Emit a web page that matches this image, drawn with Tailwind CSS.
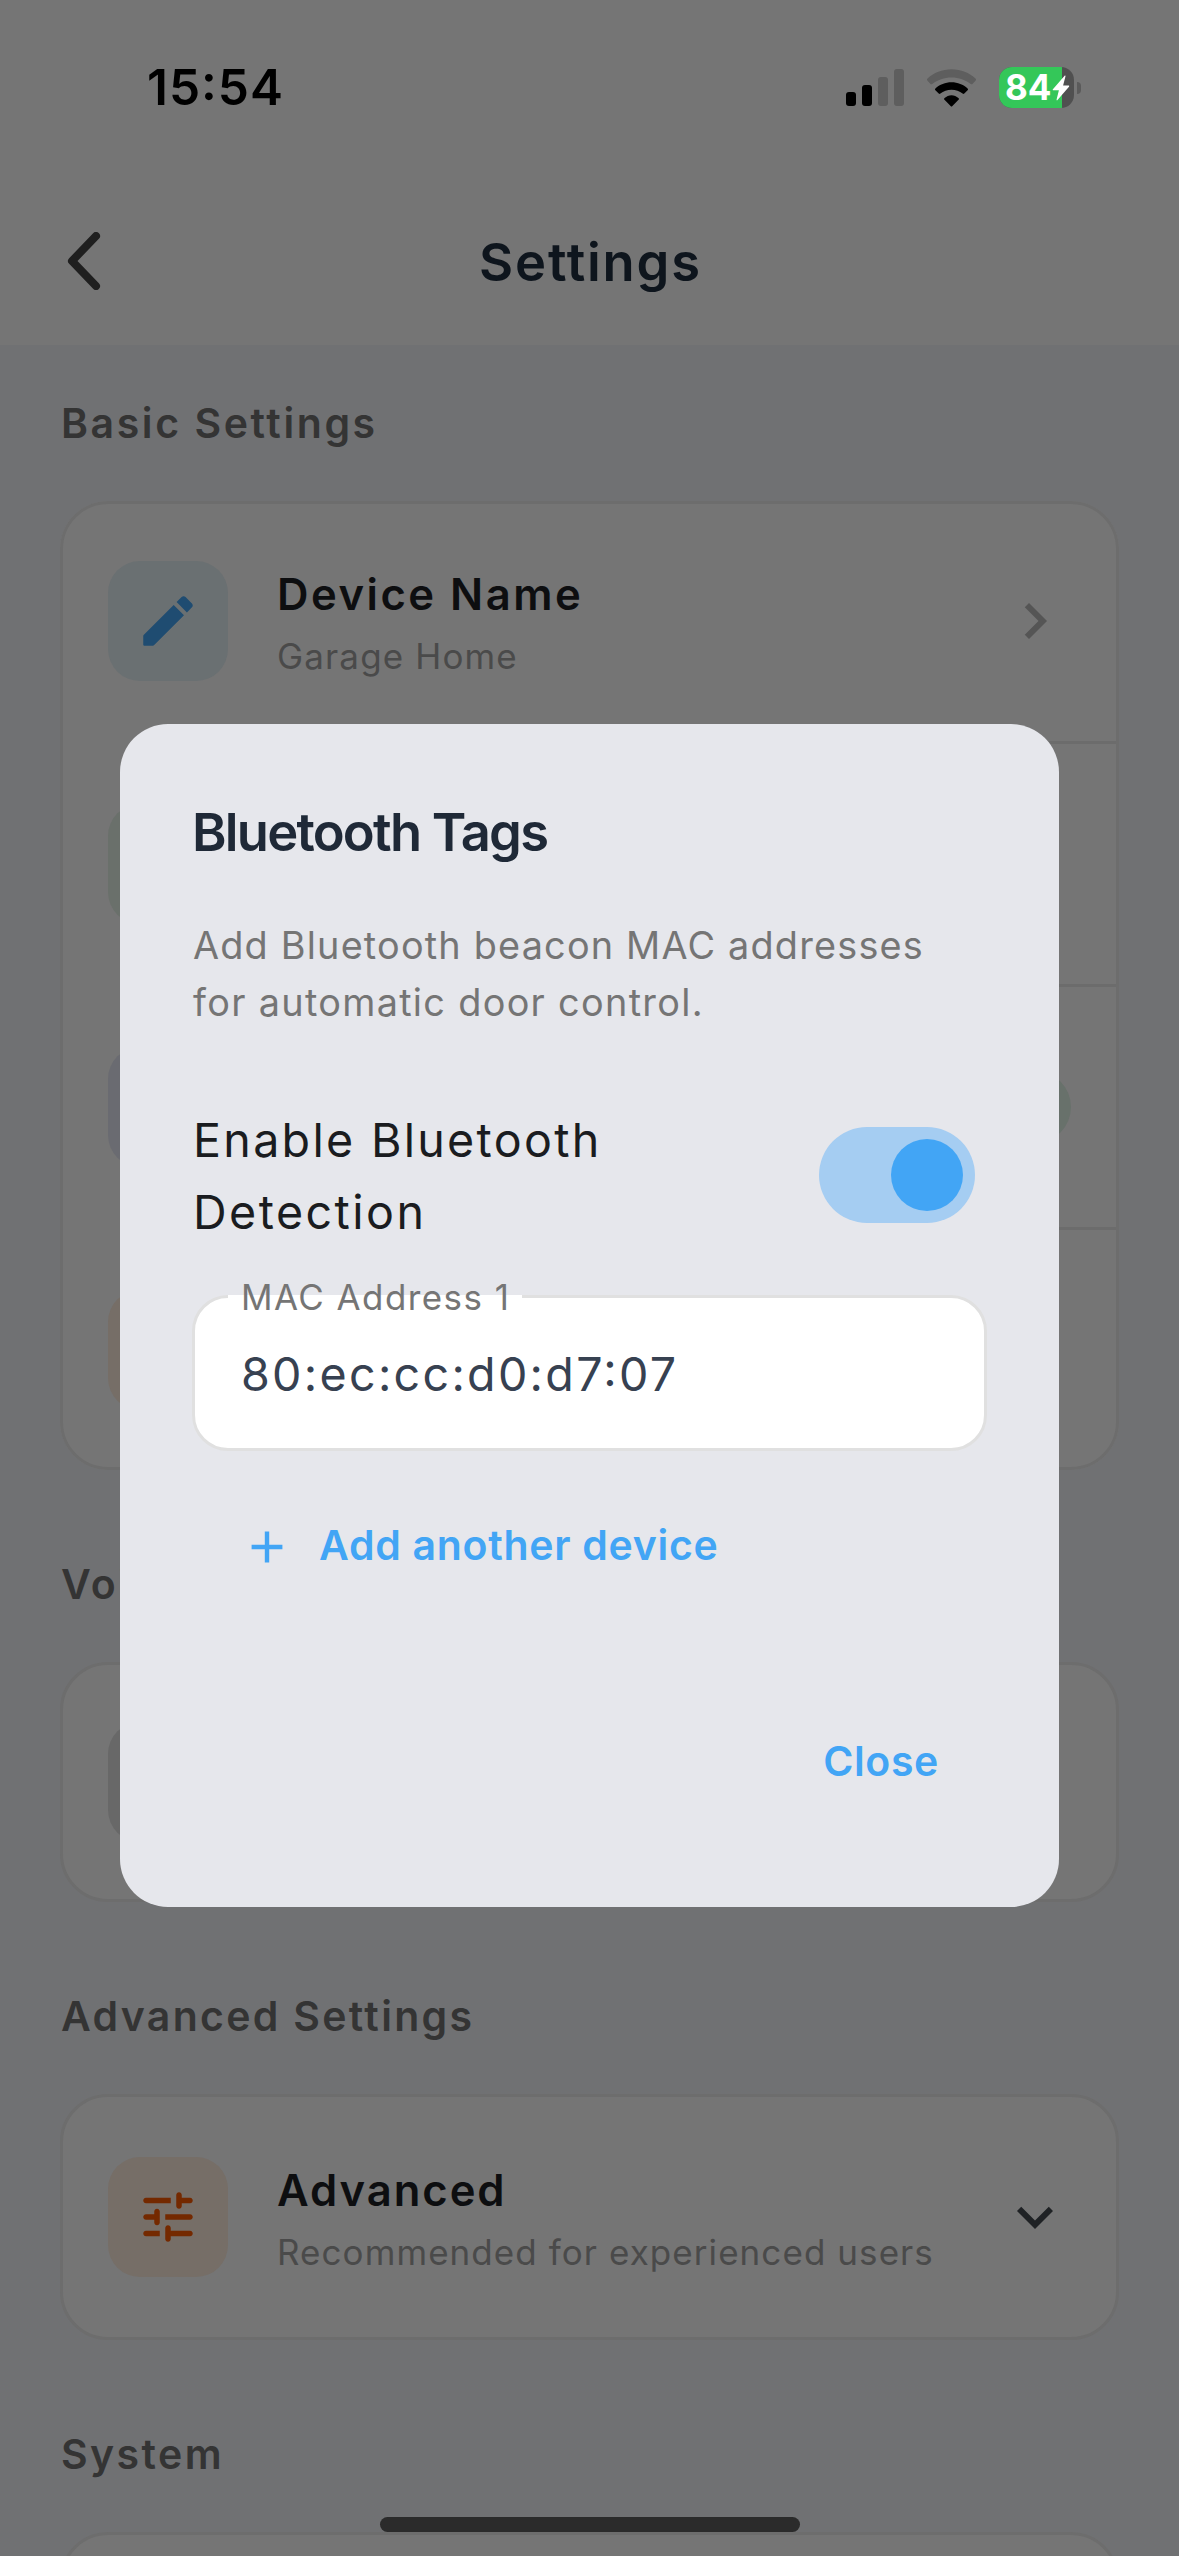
<!DOCTYPE html>
<html lang="en">

<head>
    <meta charset="UTF-8" />
    <meta name="viewport" content="width=device-width, initial-scale=1.0" />
    <title>Settings</title>
    <script src="https://cdn.jsdelivr.net/npm/@tailwindcss/browser@4"></script>
</head>

<body class="font-['Inter',sans-serif] bg-[#707173]">

    <div class="relative w-[1179px] h-[2556px] overflow-hidden bg-[#707173]">

        <!-- Header -->
        <header class="h-[345px] bg-[#757575]">
            <!-- Status bar -->
            <div class="h-44 flex items-center justify-between pl-[147px] pr-[98px]">
                <span class="text-[49.5px] leading-none font-semibold tracking-[1px] text-black [font-feature-settings:'calt'_1]">15:54</span>
                <div class="flex items-center mb-px">
                    <svg class="w-[58px] h-[37px]" viewBox="0 0 58 37">
                        <rect x="0" y="23" width="10" height="14" rx="3" fill="#000" />
                        <rect x="16" y="16" width="10" height="21" rx="3" fill="#000" />
                        <rect x="32" y="8" width="10" height="29" rx="3" fill="#5e5e5e" />
                        <rect x="48" y="0" width="10" height="37" rx="3" fill="#5e5e5e" />
                    </svg>
                    <svg class="ml-[22px] w-[51px] h-[38px]" viewBox="0 0 51 38">
                        <path d="M1.3 11.4a1.2 1.2 0 0 1 0-1.7C7.6 3.7 16.2.3 25.5.3s17.9 3.4 24.2 9.400a1.200 1.200 0 0 1 0 1.700l-3.200 3.500a1.300 1.300 0 0 1-1.800 0C39.500 10.900 32.800 8.400 25.500 8.400S11.500 10.900 6.300 14.900a1.300 1.300 0 0 1-1.800 0z" fill="#5e5e5e" />
                        <path d="M9.400 21.200a1.200 1.200 0 0 1 0-1.800C13.700 15.500 19.300 13.200 25.500 13.200s11.800 2.300 16.100 6.200a1.200 1.200 0 0 1 0 1.800l-3.300 3.400a1.200 1.200 0 0 1-1.700 0C33.600 22.200 29.700 20.800 25.500 20.800s-8.100 1.400-11.100 3.800a1.200 1.200 0 0 1-1.700 0z" fill="#000" />
                        <path d="M18.500 30.800a1.200 1.200 0 0 1 .1-1.800C20.500 27.300 22.900 26.200 25.500 26.200s5 1.100 6.900 2.800a1.200 1.200 0 0 1 .1 1.800l-6.100 6.200a1.200 1.200 0 0 1-1.800 0z" fill="#000" />
                    </svg>
                    <!-- Battery -->
                    <div class="relative ml-[22px] w-[75px] h-[41px] rounded-[13px] overflow-hidden bg-[#505050] flex items-center">
                        <div class="absolute inset-y-0 left-0 w-[63px] bg-[#34c759]"></div>
                        <span class="relative ml-[6px] text-[35px] leading-none font-bold tracking-[0px] text-white">84</span>
                        <svg class="absolute left-[53px] top-[8px] w-[18px] h-[26px]" viewBox="0 0 18 26">
                            <path d="M12.600.8L.9 14.200c-.4.5-.2 1.100.5 1.100h5.500L4.600 24.600c-.2.800.4 1.100.9.500L17 11.700c.4-.5.2-1.100-.5-1.100h-5.400L13.500 1.300c.2-.8-.4-1.100-.9-.5z" fill="#fff" />
                        </svg>
                    </div>
                    <div class="ml-[3px] w-1 h-3 rounded-r-full bg-[#5a5a5a]"></div>
                </div>
            </div>
            <!-- Title bar -->
            <div class="relative h-[169px] flex items-center justify-center">
                <svg class="absolute left-[66px] top-[56px] w-[36px] h-[58px]" viewBox="0 0 36 58" fill="none"
                    stroke="#1f1f1f" stroke-width="8" stroke-linecap="round" stroke-linejoin="round">
                    <path d="M30 4L6 29l24 25" />
                </svg>
                <h1 class="mt-[3px] ml-[2px] text-[52.5px] leading-none font-semibold tracking-[1.84px] text-[#0e151d]">Settings</h1>
            </div>
        </header>

        <main class="px-[60px]">
            <!-- Basic settings -->
            <h2 class="pt-[53px] pb-[53px] pl-[1px] text-[41px] leading-[50px] font-semibold tracking-[2.58px] text-[#343434]">Basic Settings</h2>
            <div class="relative h-[969px] rounded-[48px] overflow-hidden bg-[#757575]">
                <div class="h-[240px] flex items-center px-12">
                    <div class="size-[120px] rounded-[32px] bg-[#6a7072] flex items-center justify-center">
                        <svg class="size-[66px]" viewBox="0 0 24 24" fill="#1f4c71">
                            <path d="M3 17.460v3.040c0 .280.220.500.500.500h3.040c.130 0 .260-.050.350-.150L17.810 9.940l-3.750-3.750L3.150 17.100c-.100.100-.150.220-.150.360zM20.710 7.040c.390-.390.390-1.020 0-1.410l-2.340-2.340c-.390-.390-1.020-.390-1.410 0l-1.830 1.830 3.750 3.750 1.830-1.830z" />
                        </svg>
                    </div>
                    <div class="ml-[49px] mt-[3px] flex-1">
                        <p class="text-[43.6px] leading-[54px] font-semibold tracking-[2.5px] text-[#0d0e10]">Device Name</p>
                        <p class="mt-[13px] text-[35px] leading-[42px] tracking-[1.14px] text-[#4a4a4a]">Garage Home</p>
                    </div>
                    <svg class="size-[72px]" viewBox="0 0 24 24" fill="#555555">
                        <path d="M10 6L8.590 7.410 13.170 12l-4.580 4.590L10 18l6-6z" />
                    </svg>
                </div>
                <div class="h-[3px] ml-[216px] bg-[#6c6c6c]"></div>
                <div class="h-[240px] flex items-center px-12">
                    <div class="size-[120px] rounded-[32px] bg-[#6a706b]"></div>
                </div>
                <div class="h-[3px] ml-[216px] bg-[#6c6c6c]"></div>
                <div class="h-[240px] flex items-center justify-between px-12">
                    <div class="size-[120px] rounded-[32px] bg-[#6a6b71]"></div>
                    <div class="w-40 h-[72px] rounded-full bg-[#68716b]"></div>
                </div>
                <div class="h-[3px] ml-[216px] bg-[#6c6c6c]"></div>
                <div class="h-[240px] flex items-center px-12">
                    <div class="size-[120px] rounded-[32px] bg-[#766e67]"></div>
                </div>
                <div class="absolute inset-0 rounded-[48px] border-3 border-[#6d6d6d]"></div>
            </div>

            <!-- Voice -->
            <h2 class="pt-[89px] pb-[53px] pl-[1px] text-[41px] leading-[50px] font-semibold tracking-[2.3px] text-[#343434]">Voi</h2>
            <div class="h-[240px] rounded-[48px] bg-[#757575] border-3 border-[#6d6d6d] flex items-center px-[45px]">
                <div class="size-[120px] rounded-[32px] bg-[#686868]"></div>
            </div>

            <!-- Advanced settings -->
            <h2 class="pt-[89px] pb-[53px] pl-[1px] text-[41px] leading-[50px] font-semibold tracking-[2.31px] text-[#343434]">Advanced Settings</h2>
            <div class="h-[246px] rounded-[48px] bg-[#757575] border-3 border-[#6d6d6d] flex items-center px-[45px]">
                <div class="size-[120px] rounded-[32px] bg-[#766e67] flex items-center justify-center">
                    <svg class="size-[66px]" viewBox="0 0 24 24" fill="#742900">
                        <path d="M3 18c0 .55.45 1 1 1h5v-2H4c-.55 0-1 .45-1 1zM3 6c0 .55.45 1 1 1h9V5H4c-.55 0-1 .45-1 1zm10 14v-1h7c.55 0 1-.45 1-1s-.45-1-1-1h-7v-1c0-.55-.45-1-1-1s-1 .45-1 1v4c0 .55.45 1 1 1s1-.45 1-1zM7 10v1H4c-.55 0-1 .45-1 1s.45 1 1 1h3v1c0 .55.45 1 1 1s1-.45 1-1v-4c0-.55-.45-1-1-1s-1 .45-1 1zm14 2c0-.55-.45-1-1-1h-9v2h9c.55 0 1-.45 1-1zm-5-3c.55 0 1-.45 1-1V7h3c.55 0 1-.45 1-1s-.45-1-1-1h-3V4c0-.55-.45-1-1-1s-1 .45-1 1v4c0 .55.45 1 1 1z" />
                    </svg>
                </div>
                <div class="ml-[49px] mt-[3px] flex-1">
                    <p class="text-[43.6px] leading-[54px] font-semibold tracking-[1.95px] text-[#0d0e10]">Advanced</p>
                    <p class="mt-[13px] text-[35px] leading-[42px] tracking-[1.07px] text-[#4a4a4a] whitespace-nowrap">Recommended for experienced users</p>
                </div>
                <svg class="size-[72px]" viewBox="0 0 24 24" fill="#1f2225">
                    <path d="M16.590 8.590L12 13.170 7.410 8.590 6 10l6 6 6-6z" />
                </svg>
            </div>

            <!-- System -->
            <h2 class="pt-[89px] pb-[53px] pl-[1px] text-[41px] leading-[50px] font-semibold tracking-[2.4px] text-[#343434]">System</h2>
            <div class="h-[240px] rounded-[48px] bg-[#757575] border-3 border-[#6d6d6d]"></div>
        </main>

        <!-- Bluetooth dialog -->
        <div class="absolute left-[120px] top-[724px] w-[939px] h-[1183px] rounded-[48px] bg-[#e6e7ec] pt-[76px] px-[72px]">
            <h3 class="text-[52.5px] leading-[64px] font-semibold tracking-[-1.78px] text-[#1f2937]">Bluetooth Tags</h3>
            <p class="mt-[53px] ml-[1px] text-[37.8px] leading-[57px] tracking-[1.2px] text-[#757575] whitespace-nowrap">Add Bluetooth beacon MAC addresses<br><span class="tracking-[1.32px]">for automatic door control.</span></p>

            <div class="mt-[73px] flex items-center justify-between pr-3">
                <p class="ml-[1px] text-[46.6px] leading-[72px] tracking-[2.3px] text-[#1a1c20]">Enable Bluetooth<br><span class="tracking-[2.45px]">Detection</span></p>
                <div class="mb-[3px] w-[156px] h-24 rounded-full bg-[#a5cdf2] flex items-center justify-end pr-3">
                    <div class="size-[72px] rounded-full bg-[#42a5f5]"></div>
                </div>
            </div>

            <div class="relative mt-[47px] h-[156px] rounded-[36px] border-3 border-[#e0e0e0] bg-white flex items-center pl-[46px]">
                <span class="mt-[2px] text-[46.6px] leading-none tracking-[2.29px] text-[#374151] [font-feature-settings:'calt'_1]">80:ec:cc:d0:d7:07</span>
                <!-- the floating label breaks the top border -->
                <div class="absolute left-[33px] top-[-3px] w-[294px] h-[4px] bg-white"></div>
                <label class="absolute left-[46px] top-[-22px] text-[34.9px] leading-[42px] tracking-[1.47px] text-[#757575] whitespace-nowrap">MAC Address 1</label>
            </div>

            <button class="mt-[69px] ml-[59px] flex items-center text-[#42a5f5]">
                <svg class="mt-[3px] w-[32px] h-[32px]" viewBox="0 0 32 32" stroke="currentColor" stroke-width="4.4">
                    <path d="M16 .6v30.8M.6 16h30.8" />
                </svg>
                <span class="ml-[36px] text-[41px] leading-[50px] font-semibold tracking-[0.71px]">Add another device</span>
            </button>

            <div class="mt-[166px] flex justify-end pr-[48px]">
                <button class="text-[41px] leading-[50px] font-semibold tracking-[0.64px] text-[#42a5f5]">Close</button>
            </div>
        </div>

        <!-- Home indicator -->
        <div class="absolute left-[380px] top-[2517px] w-[420px] h-[15px] rounded-full bg-[#2b2b2b]"></div>
    </div>

</body>

</html>
